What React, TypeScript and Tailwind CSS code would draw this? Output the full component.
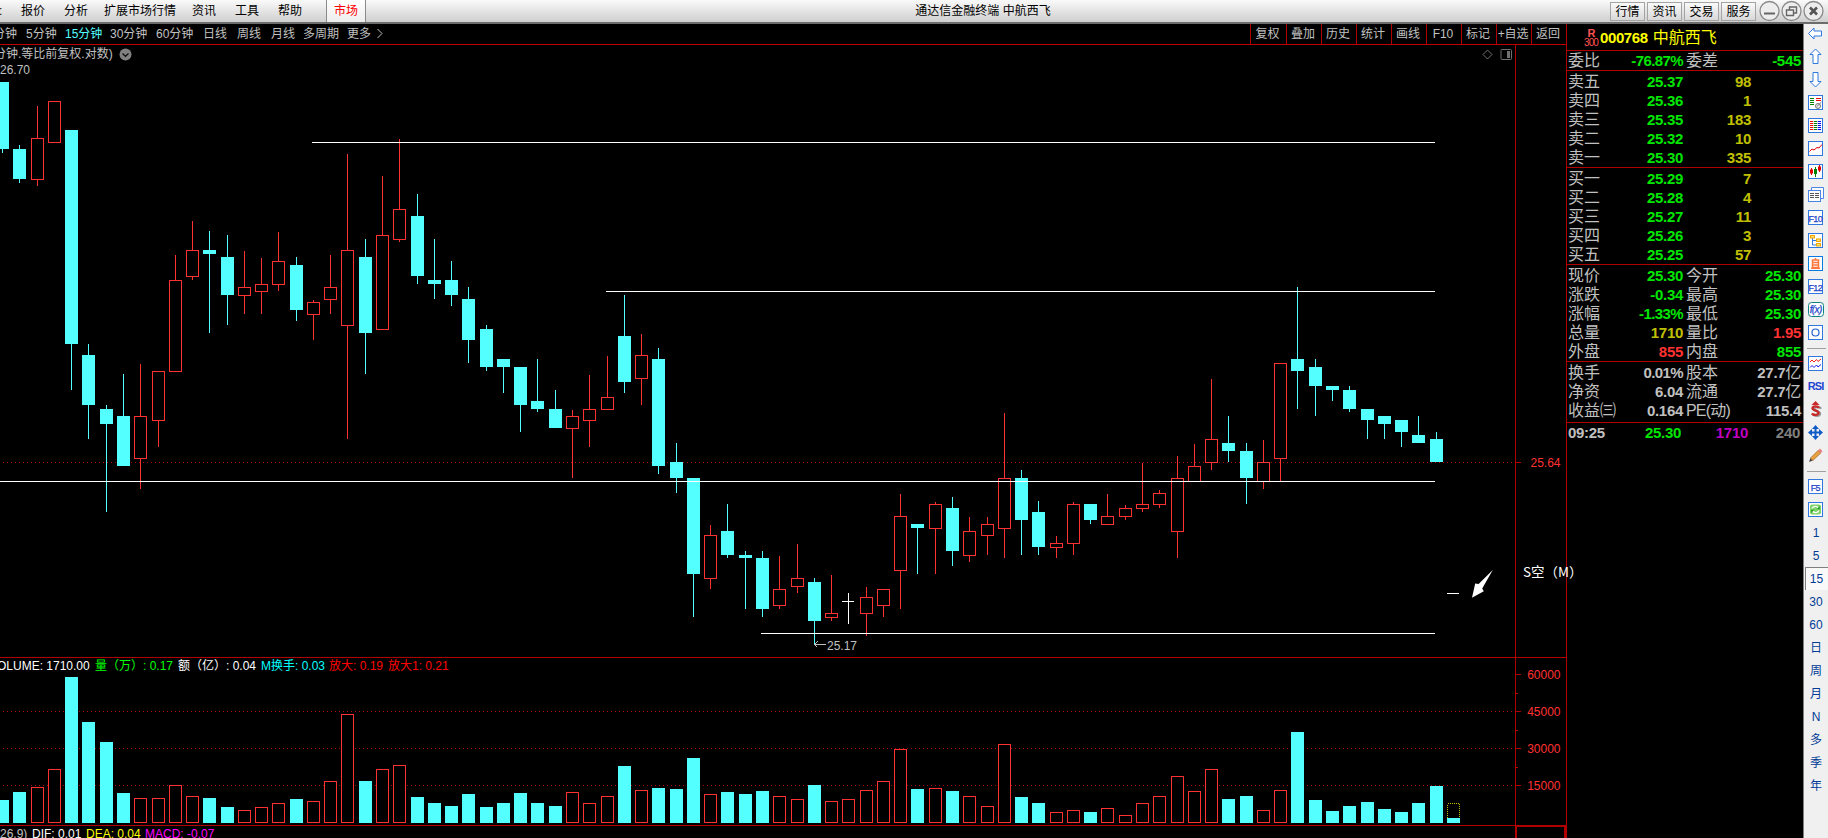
import React, { ReactNode } from 'react';
import clsx from 'clsx';

type Kind = 'u' | 'd' | 'x';

// x, high, body top, body bottom, low, volume top, kind
type Bar = [number, number, number, number, number, number, Kind];

const bars: Bar[] = [
  [2, 82, 82, 149, 153, 800, 'd'],
  [19, 145, 149, 179, 183, 792, 'd'],
  [37, 106, 138, 180, 186, 787, 'u'],
  [54, 101, 101, 143, 143, 769, 'u'],
  [71, 130, 130, 344, 390, 677, 'd'],
  [88, 344, 355, 405, 439, 722, 'd'],
  [106, 405, 409, 424, 512, 742, 'd'],
  [123, 374, 416, 466, 466, 793, 'd'],
  [140, 364, 416, 459, 489, 798, 'u'],
  [158, 371, 371, 421, 447, 798, 'u'],
  [175, 255, 280, 372, 372, 785, 'u'],
  [192, 221, 250, 277, 280, 796, 'u'],
  [209, 231, 250, 254, 333, 798, 'd'],
  [227, 235, 257, 295, 325, 807, 'd'],
  [244, 251, 287, 296, 314, 810, 'u'],
  [261, 258, 284, 292, 314, 807, 'u'],
  [278, 232, 261, 285, 291, 803, 'u'],
  [296, 257, 265, 310, 321, 799, 'd'],
  [313, 300, 302, 315, 340, 801, 'u'],
  [330, 255, 287, 300, 314, 781, 'u'],
  [347, 154, 250, 326, 439, 714, 'u'],
  [365, 239, 257, 333, 374, 781, 'd'],
  [382, 176, 235, 330, 330, 769, 'u'],
  [399, 139, 209, 240, 242, 765, 'u'],
  [417, 194, 216, 276, 284, 797, 'd'],
  [434, 239, 280, 284, 299, 803, 'd'],
  [451, 261, 280, 295, 306, 806, 'd'],
  [468, 287, 299, 340, 363, 794, 'd'],
  [486, 325, 329, 367, 371, 807, 'd'],
  [503, 359, 359, 367, 393, 803, 'd'],
  [520, 367, 367, 405, 432, 793, 'd'],
  [537, 359, 401, 409, 412, 803, 'd'],
  [555, 390, 409, 428, 428, 806, 'd'],
  [572, 410, 416, 429, 478, 792, 'u'],
  [589, 375, 409, 421, 447, 803, 'u'],
  [607, 356, 397, 410, 410, 796, 'u'],
  [624, 295, 336, 382, 393, 766, 'd'],
  [641, 334, 355, 379, 405, 790, 'u'],
  [658, 348, 359, 466, 474, 788, 'd'],
  [676, 443, 462, 478, 493, 789, 'd'],
  [693, 478, 478, 574, 617, 758, 'd'],
  [710, 525, 535, 579, 589, 794, 'u'],
  [727, 504, 531, 555, 558, 792, 'd'],
  [745, 551, 555, 558, 609, 794, 'd'],
  [762, 551, 558, 609, 617, 791, 'd'],
  [779, 556, 589, 606, 609, 796, 'u'],
  [797, 544, 578, 587, 593, 799, 'u'],
  [814, 578, 582, 621, 645, 785, 'd'],
  [831, 575, 613, 618, 621, 801, 'u'],
  [848, 593, 601, 602, 624, 799, 'x'],
  [866, 587, 597, 614, 636, 790, 'u'],
  [883, 589, 589, 606, 617, 781, 'u'],
  [900, 494, 516, 571, 609, 749, 'u'],
  [917, 524, 524, 528, 574, 789, 'd'],
  [935, 502, 504, 529, 574, 788, 'u'],
  [952, 497, 508, 551, 566, 791, 'd'],
  [969, 517, 531, 556, 562, 796, 'u'],
  [987, 517, 524, 536, 555, 806, 'u'],
  [1004, 413, 478, 529, 558, 744, 'u'],
  [1021, 470, 478, 520, 555, 797, 'd'],
  [1038, 501, 512, 547, 555, 803, 'd'],
  [1056, 536, 543, 548, 558, 812, 'u'],
  [1073, 502, 504, 544, 555, 810, 'u'],
  [1090, 504, 504, 520, 524, 812, 'd'],
  [1107, 494, 516, 525, 525, 808, 'u'],
  [1125, 505, 508, 517, 520, 815, 'u'],
  [1142, 463, 504, 509, 512, 803, 'u'],
  [1159, 490, 493, 505, 508, 796, 'u'],
  [1177, 456, 478, 532, 558, 776, 'u'],
  [1194, 444, 466, 482, 482, 791, 'u'],
  [1211, 379, 439, 463, 470, 769, 'u'],
  [1228, 416, 443, 451, 462, 799, 'd'],
  [1246, 443, 451, 478, 504, 796, 'd'],
  [1263, 440, 462, 482, 489, 810, 'u'],
  [1280, 363, 363, 459, 482, 790, 'u'],
  [1297, 287, 359, 371, 409, 732, 'd'],
  [1315, 359, 367, 386, 416, 800, 'd'],
  [1332, 386, 386, 390, 401, 811, 'd'],
  [1349, 386, 390, 409, 412, 806, 'd'],
  [1367, 409, 409, 420, 439, 802, 'd'],
  [1384, 416, 416, 424, 439, 809, 'd'],
  [1401, 420, 420, 432, 447, 812, 'd'],
  [1418, 416, 435, 443, 443, 803, 'd'],
  [1436, 432, 439, 462, 462, 786, 'd'],
];

const CYAN = '#54ffff';
const RED = '#ff3232';
const LINE = '#b00000';

const menus = [
  { label: '报价', cls: 'w-[42px]' },
  { label: '分析', cls: 'w-[44px]' },
  { label: '扩展市场行情', cls: 'w-[84px]' },
  { label: '资讯', cls: 'w-[44px]' },
  { label: '工具', cls: 'w-[42px]' },
  { label: '帮助', cls: 'w-[44px]' },
];

const periods = [
  { label: '分钟', cls: 'w-[33px]' },
  { label: '5分钟', cls: 'w-[39px]' },
  { label: '15分钟', cls: 'w-[45px] text-[#54ffff]' },
  { label: '30分钟', cls: 'w-[46px]' },
  { label: '60分钟', cls: 'w-[47px]' },
  { label: '日线', cls: 'w-[34px]' },
  { label: '周线', cls: 'w-[34px]' },
  { label: '月线', cls: 'w-[32px]' },
  { label: '多周期', cls: 'w-[44px]' },
  { label: '更多', cls: 'w-[30px]' },
];

const tools = ['复权', '叠加', '历史', '统计', '画线', 'F10', '标记', '+自选', '返回'];

const sells = [
  ['卖五', '25.37', '98'],
  ['卖四', '25.36', '1'],
  ['卖三', '25.35', '183'],
  ['卖二', '25.32', '10'],
  ['卖一', '25.30', '335'],
];

const buys = [
  ['买一', '25.29', '7'],
  ['买二', '25.28', '4'],
  ['买三', '25.27', '11'],
  ['买四', '25.26', '3'],
  ['买五', '25.25', '57'],
];

const G = 'text-[#00e600]';
const R = 'text-[#ff3232]';
const Y = 'text-[#c0c000]';
const W = 'text-[#c0c0c0]';

const quotes = [
  ['现价', '25.30', G, '今开', '25.30', G],
  ['涨跌', '-0.34', G, '最高', '25.30', G],
  ['涨幅', '-1.33%', G, '最低', '25.30', G],
  ['总量', '1710', Y, '量比', '1.95', R],
  ['外盘', '855', R, '内盘', '855', G],
];

const basics = [
  ['换手', '0.01%', W, '股本', '27.7亿', W],
  ['净资', '6.04', W, '流通', '27.7亿', W],
  ['收益㈢', '0.164', W, 'PE(动)', '115.4', W],
];

const Dots = ({ y }: { y: number }) => (
  <line x1="3" x2="1513" y1={y + 0.5} y2={y + 0.5} stroke={LINE} strokeDasharray="1 3" />
);

const Candle = ({ bar }: { bar: Bar }) => {
  const [x, high, top, bottom, low, , kind] = bar;
  if (kind === 'x') {
    return (
      <g fill="#fff">
        <rect x={x} y={high} width="1" height={low - high} />
        <rect x={x - 6} y={top} width="12" height="1" />
      </g>
    );
  }
  if (kind === 'd') {
    return (
      <g fill={CYAN}>
        <rect x={x} y={high} width="1" height={low - high} />
        <rect x={x - 6} y={top} width="13" height={bottom - top} />
      </g>
    );
  }
  return (
    <g fill={RED}>
      <rect x={x} y={high} width="1" height={top - high} />
      <rect x={x} y={bottom} width="1" height={low - bottom} />
      <rect x={x - 5.5} y={top + 0.5} width="12" height={bottom - top - 1} fill="none" stroke={RED} />
    </g>
  );
};

const PriceChart = () => (
  <svg width="1515" height="593" viewBox="0 64 1515 593" shapeRendering="crispEdges" className="block">
    <Dots y={462} />
    {bars.map((b) => (
      <Candle key={b[0]} bar={b} />
    ))}
    <g fill="#fff">
      <rect x="312" y="142" width="1123" height="1" />
      <rect x="606" y="291" width="829" height="1" />
      <rect x="0" y="481" width="1435" height="1" />
      <rect x="761" y="633" width="674" height="1" />
      <rect x="1447" y="593" width="12" height="1" />
      <path
        shapeRendering="geometricPrecision"
        d="M1492.8 570 L1478.6 584 L1475.2 583.6 L1472 597.8 L1483.8 591.2 L1482.2 588.6 Z"
      />
    </g>
    <path d="M814.5 644.5H826M814.5 644.5L817.5 641.5M814.5 644.5L817.5 647.5" stroke="#c0c0c0" fill="none" />
    <g fill="#c0c0c0" fontSize="12" fontFamily="Liberation Sans, sans-serif">
      <text x="0" y="74">26.70</text>
      <text x="827" y="650">25.17</text>
    </g>
  </svg>
);

const VolumeChart = () => (
  <svg width="1515" height="150" viewBox="0 675 1515 150" shapeRendering="crispEdges" className="block">
    <Dots y={711} />
    <Dots y={748} />
    <Dots y={785} />
    {bars.map(([x, , , , , v, kind]) =>
      kind === 'd' ? (
        <rect key={x} x={x - 6} y={v} width="13" height={823 - v} fill={CYAN} />
      ) : (
        <rect key={x} x={x - 5.5} y={v + 0.5} width="12" height={822 - v} fill="#000" stroke={RED} />
      )
    )}
    <rect x="1447.5" y="803.5" width="12" height="16" fill="none" stroke="#c0c000" strokeDasharray="1 1" />
    <rect x="1447" y="818" width="13" height="5" fill={CYAN} />
  </svg>
);

const AxisPrice = () => (
  <svg width="50" height="612" viewBox="1516 45 50 612" shapeRendering="crispEdges" className="block">
    <rect x="1516" y="462" width="5" height="1" fill={LINE} />
    <text x="1560.5" y="467" textAnchor="end" fontSize="12" fill={RED} fontFamily="Liberation Sans, sans-serif">
      25.64
    </text>
  </svg>
);

const AxisVolume = () => (
  <svg width="50" height="167" viewBox="1516 658 50 167" shapeRendering="crispEdges" className="block">
    {[674, 711, 748, 785].map((y, i) => (
      <g key={y}>
        <rect x="1516" y={y} width="5" height="1" fill={LINE} />
        {i < 3 && <rect x="1516" y={y + 19} width="2" height="1" fill={LINE} />}
        <text x="1560.5" y={y + 5} textAnchor="end" fontSize="12" fill={RED} fontFamily="Liberation Sans, sans-serif">
          {60000 - i * 15000}
        </text>
      </g>
    ))}
  </svg>
);

const BookRow = ({ row }: { row: string[] }) => (
  <div className="flex h-[19px] items-center">
    <span className="w-[50px]">{row[0]}</span>
    <span className="w-[65px] text-right text-[15px] font-bold tracking-[-0.3px] text-[#00e600]">{row[1]}</span>
    <span className="w-[68px] text-right text-[15px] font-bold tracking-[-0.3px] text-[#c0c000]">{row[2]}</span>
  </div>
);

const PairRow = ({ row }: { row: string[] }) => (
  <div className="flex h-[19px] items-center">
    <span className="w-[50px] whitespace-nowrap">{row[0]}</span>
    <span
      className={clsx(
        'w-[65px] text-right text-[15px] font-bold',
        row[1].endsWith('%') ? 'tracking-[-0.6px]' : 'tracking-[-0.3px]',
        row[2]
      )}
    >
      {row[1]}
    </span>
    <span className={clsx('ml-[3px] w-[46px] whitespace-nowrap', row[3] === 'PE(动)' && 'tracking-[-0.8px]')}>
      {row[3]}
    </span>
    <span className={clsx('w-[69px] whitespace-nowrap text-right text-[15px] font-bold tracking-[-0.3px]', row[5])}>
      {row[4].replace('亿', '')}
      {row[4].endsWith('亿') && <span className="text-[16px] font-normal">亿</span>}
    </span>
  </div>
);

const Glyph = ({ children }: { children: ReactNode }) => (
  <svg width="17" height="17" viewBox="0 0 17 17" fill="none" className="-ml-[2px]">
    {children}
  </svg>
);

const Framed = ({ children, stroke = '#2f78e0' }: { children: ReactNode; stroke?: string }) => (
  <Glyph>
    <rect x="1.5" y="1.5" width="14" height="14" fill="#fff" stroke={stroke} />
    {children}
  </Glyph>
);

const FramedText = ({ children }: { children: ReactNode }) => (
  <Framed>
    <text
      x="8.3"
      y="12.5"
      fontSize="9"
      letterSpacing="-0.6"
      textAnchor="middle"
      fill="#1c44c8"
      stroke="#1c44c8"
      strokeWidth="0.25"
      fontFamily="Liberation Sans, sans-serif"
    >
      {children}
    </text>
  </Framed>
);

const sideTop: ReactNode[] = [
  <Glyph key="left"><path d="M1.5 8.5L7 3V6H14.5V11H7V14Z" fill="#fff" stroke="#2f78e0" /></Glyph>,
  <Glyph key="up"><path d="M8.5 1L14 6.5H11V15.5H6V6.5H3Z" fill="#fff" stroke="#2f78e0" /></Glyph>,
  <Glyph key="down"><path d="M8.5 16L14 10.5H11V1.5H6V10.5H3Z" fill="#fff" stroke="#2f78e0" /></Glyph>,
  <Framed key="list">
    <path d="M3 4.5H7M3 6.5H7M3 8.5H7M3 10.5H7" stroke="#008000" />
    <path d="M9 4.5H14M9 6.5H14" stroke="#f00000" />
    <circle cx="11" cy="12" r="2.5" fill="#eee" stroke="#777" />
    <path d="M9.8 12.5L14.5 8" stroke="#777" />
  </Framed>,
  <Framed key="grid">
    <path d="M3 4.5H6.3M3 6.5H6.3M3 8.5H6.3M3 10.5H6.3M3 12.5H6.3" stroke="#f00000" />
    <path d="M7 4.5H10M7 6.5H10M7 8.5H10M7 10.5H10M7 12.5H10" stroke="#008000" />
    <path d="M10.7 4.5H14M10.7 6.5H14M10.7 8.5H14M10.7 10.5H14M10.7 12.5H14" stroke="#0000f0" />
  </Framed>,
  <Framed key="trend"><path d="M2.5 11.5L5 9L7 10L10 7.5L12 8L15 4.5" stroke="#e00000" /></Framed>,
  <Framed key="candles">
    <path d="M4.5 5V12M12.5 2V9" stroke="#e00000" />
    <path d="M8.5 4V14" stroke="#008000" />
    <rect x="3" y="6.5" width="3" height="4" fill="#e00000" />
    <rect x="7" y="6" width="3" height="5" fill="#008000" />
    <rect x="11" y="3.5" width="3" height="4" fill="#e00000" />
  </Framed>,
  <Glyph key="windows">
    <path d="M4.5 4V1.5H16.5V12.5H14" stroke="#4a86e8" fill="#fff" />
    <rect x="1.5" y="4.5" width="12" height="11" fill="#fff" stroke="#4a86e8" />
    <path d="M3 7.5H7M8 7.5H12M3 9.5H7M8 9.5H12M3 11.5H7M8 11.5H12" stroke="#555" />
  </Glyph>,
  <FramedText key="f10">F10</FramedText>,
  <Framed key="tree">
    <path d="M5.5 6V13H9M5.5 8.5H9" stroke="#2f78e0" />
    <rect x="3.5" y="3.5" width="4" height="2.5" fill="#ffe070" stroke="#f0a800" />
    <rect x="9.5" y="7" width="4" height="2.5" fill="#ffe070" stroke="#f0a800" />
    <rect x="9.5" y="11.5" width="4" height="2.5" fill="#ffe070" stroke="#f0a800" />
  </Framed>,
  <Framed key="self" stroke="#0a7be0">
    <path d="M8.5 3V5M5.5 5H11.5V12.5H5.5ZM5.5 7.5H11.5M5.5 10H11.5M4 13.2H13" stroke="#ff7840" strokeWidth="1.5" />
  </Framed>,
  <FramedText key="f12">F12</FramedText>,
  <Glyph key="fx">
    <rect x="1.5" y="1.5" width="15" height="14" rx="3" fill="#fff" stroke="#108080" />
    <text
      x="8.7"
      y="12.3"
      fontSize="10"
      textAnchor="middle"
      fill="#1c44c8"
      fontStyle="italic"
      letterSpacing="-0.6"
      stroke="#1c44c8"
      strokeWidth="0.25"
      fontFamily="Liberation Sans, sans-serif"
    >
      f(x)
    </text>
  </Glyph>,
  <Framed key="ring"><circle cx="8.5" cy="8.5" r="3.5" stroke="#2060d0" strokeWidth="1.2" /></Framed>,
];

const sideMid: ReactNode[] = [
  <Framed key="waves">
    <path d="M3 7L5 5L7 7L9.5 4.5L11 6.5L14 4" stroke="#f02020" />
    <path d="M3 12.5L5 10.5L7 12.5L9.5 10L11 12L14 9.5" stroke="#2020f0" />
  </Framed>,
  <span key="rsi" className="-ml-[1px] text-[11px] font-bold tracking-[-0.9px] text-[#2346d2]">RSI</span>,
  <Glyph key="dollar">
    <path d="M13 7C12 5 6.5 4.5 6 7.2C5.8 9.8 12.3 9 12 12C11.6 14.6 6.5 14.4 5.5 12.4" stroke="#999" strokeWidth="2.4" transform="translate(1 .8)" />
    <path d="M12 7C11 5 6 4.5 5.5 7.2C5.3 9.8 11.8 9 11.5 12C11.2 14.6 6 14.4 5 12.4" stroke="#c82828" strokeWidth="2.4" />
    <path d="M8.5 0L12.5 4H4.5Z" fill="#c82828" />
  </Glyph>,
  <Glyph key="move">
    <path d="M8.5 1L12 5H5ZM8.5 16L12 12H5ZM1 8.5L5 5V12ZM16 8.5L12 5V12Z" fill="#0f5cc8" />
    <path d="M8.5 4V13M4 8.5H13" stroke="#0f5cc8" strokeWidth="2" />
  </Glyph>,
  <Glyph key="pencil">
    <path d="M2 15L3.5 11L5.8 13.5Z" fill="#444" />
    <path d="M3.5 11L11 3.5L13.6 6.2L5.8 13.5Z" fill="#e8a040" stroke="#a06420" strokeWidth="0.7" />
    <path d="M11 3.5L13 1.5L15.5 4.2L13.6 6.2Z" fill="#e88080" />
  </Glyph>,
];

const sideEnd: ReactNode[] = [
  <FramedText key="f5">F5</FramedText>,
  <Framed key="refresh">
    <rect x="3" y="3.5" width="11" height="10" rx="2" fill="#7ed36a" />
    <path d="M5 7.5C6.5 4.5 10 5 11.5 7M12 9.5C10.5 12.5 7 12 5.5 10" stroke="#fff" strokeWidth="1.4" />
    <path d="M12.8 5V8.2H9.6ZM4.2 12V8.8H7.4Z" fill="#2a9a20" />
  </Framed>,
];

const sidePeriods = ['1', '5', '15', '30', '60', '日', '周', '月', 'N', '多', '季', '年'];

const SideSlot = ({ children, active }: { children: ReactNode; active?: boolean }) => (
  <div
    className={clsx(
      'flex h-[23px] items-center justify-center pr-[1px] text-[12px] text-[#003c96]',
      active && 'border-l border-t border-[#808080] bg-[#f9f9f9]'
    )}
  >
    {children}
  </div>
);

const Divider = () => (
  <div className="flex h-[8px] items-center px-[2px]">
    <div className="h-px w-full bg-[#a0a0a0]" />
  </div>
);

const TitleBar = () => (
  <header className="relative flex h-6 shrink-0 items-start border-b-2 border-[#6c6c6c] bg-gradient-to-b from-[#fafafa] to-[#cfcfcf] text-[12px] leading-[23px] text-black">
    <div className="h-[22px] w-[12px] overflow-hidden">
      <span className="-ml-[1px]">:</span>
    </div>
    {menus.map((m) => (
      <div key={m.label} className={clsx('shrink-0 text-center', m.cls)}>
        {m.label}
      </div>
    ))}
    <div className="ml-[14px] h-[22px] w-[40px] border-x border-[#8a8a8a] bg-gradient-to-b from-white to-[#ededed] text-center text-[#ff0000]">
      市场
    </div>
    <div className="ml-[547px] w-[140px] whitespace-nowrap text-center">通达信金融终端 中航西飞</div>
    <div className="ml-auto flex gap-[2px] pt-[2px]">
      {['行情', '资讯', '交易', '服务'].map((b) => (
        <div
          key={b}
          className="h-[19px] w-[35px] border border-[#a4a4a4] bg-gradient-to-b from-[#fafafa] to-[#d8d8d8] text-center leading-[18px]"
        >
          {b}
        </div>
      ))}
    </div>
    <svg width="71" height="22" viewBox="0 0 71 22" fill="none" className="ml-[1px]">
      <g stroke="#8a8a8a" strokeWidth="1.3" fill="#ededed">
        <circle cx="12.5" cy="11" r="9.5" />
        <circle cx="34.5" cy="11" r="9.5" />
        <circle cx="56.5" cy="11" r="9.5" />
      </g>
      <path d="M7 13.5H18" stroke="#666" strokeWidth="2" />
      <path d="M32.5 9.5V7H39.5V13H37M29.5 10H36.5V15.5H29.5Z" stroke="#666" strokeWidth="1.4" />
      <path d="M53 7.5L60 14.5M60 7.5L53 14.5" stroke="#555" strokeWidth="2.6" />
    </svg>
  </header>
);

const TabRow = () => (
  <div className="flex h-[21px] shrink-0 items-stretch justify-between overflow-hidden border-b border-[#c00000] text-[12px] leading-[21px] text-[#c0c0c0]">
    <div className="-ml-[7px] flex">
      {periods.map((p) => (
        <span key={p.label} className={clsx('shrink-0 whitespace-nowrap', p.cls)}>
          {p.label}
        </span>
      ))}
      <svg width="7" height="20" viewBox="0 0 7 20" fill="none" stroke="#c0c0c0">
        <path d="M0.5 5L5 9.5L0.5 14" />
      </svg>
    </div>
    <div className="flex">
      {tools.map((t) => (
        <span
          key={t}
          className="w-[35px] whitespace-nowrap border-l border-[#b00000] pr-[2px] text-center tracking-[-0.1px] first:w-[36px]"
        >
          {t}
        </span>
      ))}
    </div>
  </div>
);

const Charts = () => (
  <div className="flex flex-1 flex-col overflow-hidden">
    <div className="flex h-[612px] shrink-0">
      <div className="w-[1515px]">
        <div className="flex h-[19px] items-center overflow-hidden text-[12px] leading-[19px] text-[#c0c0c0]">
          <span className="-ml-[6px] whitespace-nowrap">分钟.等比前复权.对数)</span>
          <svg width="13" height="13" viewBox="0 0 13 13" fill="none" className="ml-[6px]">
            <circle cx="6.5" cy="6.5" r="6" fill="#808080" />
            <path d="M3.5 5.5L6.5 8.2L9.5 5.5" stroke="#111" strokeWidth="1.4" />
          </svg>
          <svg width="32" height="13" viewBox="0 0 32 13" fill="none" className="ml-auto mr-[1px]">
            <path d="M5.5 2L10 6.5L5.5 11L1 6.5Z" stroke="#707070" />
            <rect x="19" y="1.5" width="10.5" height="10" rx="1" stroke="#707070" />
            <rect x="25" y="3" width="3" height="7" fill="#707070" />
          </svg>
        </div>
        <PriceChart />
      </div>
      <div className="border-l border-[#b00000]">
        <AxisPrice />
      </div>
    </div>
    <div className="flex h-[168px] shrink-0 border-t border-[#b00000]">
      <div className="w-[1515px]">
        <div className="flex h-[17px] items-center overflow-hidden whitespace-nowrap text-[12px] leading-[17px]">
          <span className="-ml-[3px] w-[98px] shrink-0 text-white">OLUME: 1710.00</span>
          <span className="w-[83px] text-[#00ff00]">量（万）: 0.17</span>
          <span className="w-[83px] text-white">额（亿）: 0.04</span>
          <span className="w-[68px] text-[#00ffff]">M换手: 0.03</span>
          <span className="w-[59px] text-[#ff0000]">放大: 0.19</span>
          <span className="text-[#ff0000]">放大1: 0.21</span>
        </div>
        <VolumeChart />
      </div>
      <div className="border-l border-[#b00000]">
        <AxisVolume />
      </div>
    </div>
    <div className="flex h-[13px] shrink-0 border-t border-[#b00000]">
      <div className="flex w-[1515px] items-start overflow-hidden whitespace-nowrap text-[12px] leading-[17px]">
        <span className="w-[32px] text-[#c0c0c0]">26,9)</span>
        <span className="w-[54px] text-white">DIF: 0.01</span>
        <span className="w-[59px] text-[#ffff00]">DEA: 0.04</span>
        <span className="text-[#ff00ff]">MACD: -0.07</span>
      </div>
      <div className="w-[51px] border-x-2 border-t border-[#b00000]" />
    </div>
  </div>
);

const QuotePanel = () => (
  <aside className="w-[237px] shrink-0 border-l border-[#b00000] text-[16px] leading-[18px] text-[#c0c0c0]">
    <div className="flex h-[26px] items-center pl-[16px] pt-[1px] text-[#ffff00]">
      <div className="mr-[1px] w-[16px] text-center text-[#ff5050]">
        <div className="pl-[1px] text-[11px] font-bold leading-[10px]">R</div>
        <div className="text-[10px] leading-[10px] tracking-[-0.9px]">300</div>
      </div>
      <span className="text-[15px] font-bold tracking-[-0.4px]">000768</span>
      <span className="ml-[5px]">中航西飞</span>
    </div>
    <div className="h-[20px] border-t border-[#b00000] pl-[1px]">
      <PairRow row={['委比', '-76.87%', G, '委差', '-545', G]} />
    </div>
    <div className="h-[97px] border-t border-[#b00000] pl-[1px] pt-[1px]">
      {sells.map((r) => <BookRow key={r[0]} row={r} />)}
    </div>
    <div className="h-[97px] border-t border-[#b00000] pl-[1px] pt-[1px]">
      {buys.map((r) => <BookRow key={r[0]} row={r} />)}
    </div>
    <div className="h-[97px] border-t border-[#b00000] pl-[1px] pt-[1px]">
      {quotes.map((r) => <PairRow key={r[0]} row={r} />)}
    </div>
    <div className="h-[61px] border-t border-[#b00000] pl-[1px] pt-[1px]">
      {basics.map((r) => <PairRow key={r[0]} row={r} />)}
    </div>
    <div className="flex items-center border-t border-[#b00000] pl-[1px] text-[15px] font-bold leading-[20px] tracking-[-0.3px]">
      <span className="w-[48px]">09:25</span>
      <span className="w-[65px] text-right text-[#00e600]">25.30</span>
      <span className="w-[67px] text-right text-[#c000c0]">1710</span>
      <span className="w-[52px] text-right text-[#808080]">240</span>
    </div>
  </aside>
);

const SideBar = () => (
  <nav className="-mt-[2px] w-[25px] shrink-0 border-l border-[#808080] bg-[#f0f0f0] pl-[1px]">
    {sideTop.map((n, i) => <SideSlot key={i}>{n}</SideSlot>)}
    <Divider />
    {sideMid.map((n, i) => <SideSlot key={i}>{n}</SideSlot>)}
    <Divider />
    {sideEnd.map((n, i) => <SideSlot key={i}>{n}</SideSlot>)}
    {sidePeriods.map((p) => <SideSlot key={p} active={p === '15'}>{p}</SideSlot>)}
  </nav>
);

export default function App() {
  return (
    <div className="relative flex h-[838px] w-[1828px] flex-col overflow-hidden bg-black font-['Liberation_Sans','Noto_Sans_CJK_SC',sans-serif]">
      <TitleBar />
      <div className="flex h-[814px]">
        <main className="flex w-[1566px] shrink-0 flex-col">
          <TabRow />
          <Charts />
        </main>
        <QuotePanel />
        <SideBar />
      </div>
      <span className="absolute left-[1523px] top-[562px] whitespace-nowrap font-['Noto_Sans_CJK_SC',sans-serif] text-[13.5px] leading-[19px] text-white">
        S空（M）
      </span>
    </div>
  );
}
